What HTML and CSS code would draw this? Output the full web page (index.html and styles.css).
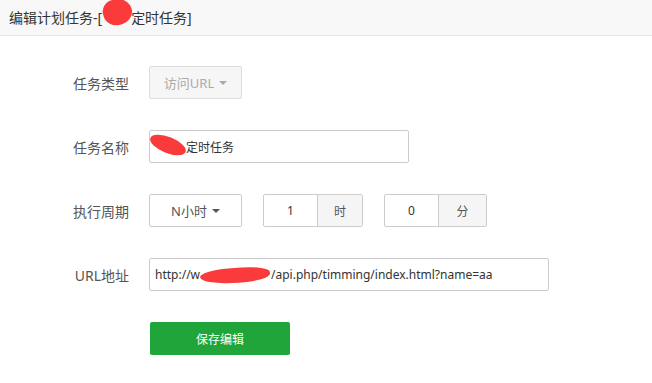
FILE: index.html
```html
<!DOCTYPE html>
<html lang="zh-CN">
<head>
<meta charset="utf-8">
<title>编辑计划任务</title>
<link rel="stylesheet" href="styles.css">
</head>
<body>
<div class="layer-title">编辑计划任务-[<span class="redact redact-title"></span>定时任务]</div>
<div class="form">
  <div class="line">
    <span class="tname">任务类型</span>
    <div class="select disabled">访问URL <span class="caret"></span></div>
  </div>
  <div class="line">
    <span class="tname">任务名称</span>
    <div class="input w260"><span class="redact redact-name"></span>定时任务</div>
  </div>
  <div class="line">
    <span class="tname">执行周期</span>
    <div class="select">N小时 <span class="caret"></span></div>
    <div class="group">
      <div class="g-input">1</div>
      <div class="g-addon">时</div>
    </div>
    <div class="group">
      <div class="g-input">0</div>
      <div class="g-addon wide">分</div>
    </div>
  </div>
  <div class="line">
    <span class="tname">URL地址</span>
    <div class="input w400">http://w<span class="redact redact-url"></span>/api.php/timming/index.html?name=aa</div>
  </div>
  <div class="line">
    <button class="btn-save">保存编辑</button>
  </div>
</div>
</body>
</html>
```
FILE: styles.css
```css
html, body {
  margin: 0;
  padding: 0;
  background: #fff;
  font-family: "Noto Sans", "Noto Sans CJK SC", sans-serif;
}
.layer-title {
  height: 35px;
  line-height: 35px;
  padding-left: 9px;
  background: #f8f8f8;
  border-bottom: 1px solid #e5e5e5;
  color: #333;
  font-size: 14px;
  white-space: nowrap;
}
.form {
  padding-top: 30px;
}
.line {
  display: flex;
  align-items: center;
  height: 33px;
  margin-bottom: 31px;
}
.tname {
  width: 129px;
  margin-right: 20px;
  text-align: right;
  font-size: 14px;
  color: #555;
}
.select {
  box-sizing: border-box;
  width: 93px;
  height: 33px;
  border: 1px solid #ccc;
  border-radius: 2px;
  display: flex;
  align-items: center;
  justify-content: center;
  gap: 4px;
  font-size: 13px;
  color: #555;
  background: #fff;
}
.select.disabled {
  background: #f6f6f6;
  color: #aaa;
  border-color: #ddd;
}
.caret {
  display: inline-block;
  width: 0;
  height: 0;
  border-left: 4px solid transparent;
  border-right: 4px solid transparent;
  border-top: 4px solid currentColor;
  margin-left: 1px;
}
.input {
  box-sizing: border-box;
  height: 33px;
  border: 1px solid #ccc;
  border-radius: 2px;
  padding: 0 5px;
  display: flex;
  align-items: center;
  font-size: 12px;
  color: #333;
  white-space: nowrap;
}
.w260 { width: 260px; }
.w400 { width: 400px; }
.group {
  display: flex;
  height: 33px;
  margin-left: 21px;
  box-sizing: border-box;
  border: 1px solid #ccc;
  border-radius: 2px;
}
.g-input {
  width: 53px;
  display: flex;
  align-items: center;
  justify-content: center;
  font-size: 12px;
  color: #333;
  border-right: 1px solid #ccc;
}
.g-addon {
  width: 44px;
  display: flex;
  align-items: center;
  justify-content: center;
  background: #f5f5f5;
  font-size: 12px;
  color: #555;
}
.g-addon.wide { width: 47px; }
.btn-save {
  margin-left: 150px;
  width: 140px;
  height: 33px;
  border: none;
  border-radius: 2px;
  background: #20a53a;
  color: #fff;
  font-size: 12px;
  font-family: inherit;
  padding: 0;
}
.redact {
  display: inline-block;
  position: relative;
  height: 1em;
  vertical-align: middle;
}
.redact::before {
  content: "";
  position: absolute;
  background: #fb3b3b;
}
.redact-title { width: 29px; }
.redact-title::before {
  left: 1px;
  top: -13px;
  width: 29px;
  height: 26px;
  border-radius: 45% 55% 50% 50%;
  transform: rotate(-15deg);
}
.redact-name { width: 31px; }
.redact-name::before {
  left: -6px;
  top: -4px;
  width: 38px;
  height: 16px;
  border-radius: 50%;
  transform: rotate(22deg);
}
.redact-url { width: 71px; }
.redact-url::before {
  left: 0;
  top: -1px;
  width: 70px;
  height: 15px;
  border-radius: 50% 45% 50% 60%;
  transform: rotate(-4deg);
}
```
